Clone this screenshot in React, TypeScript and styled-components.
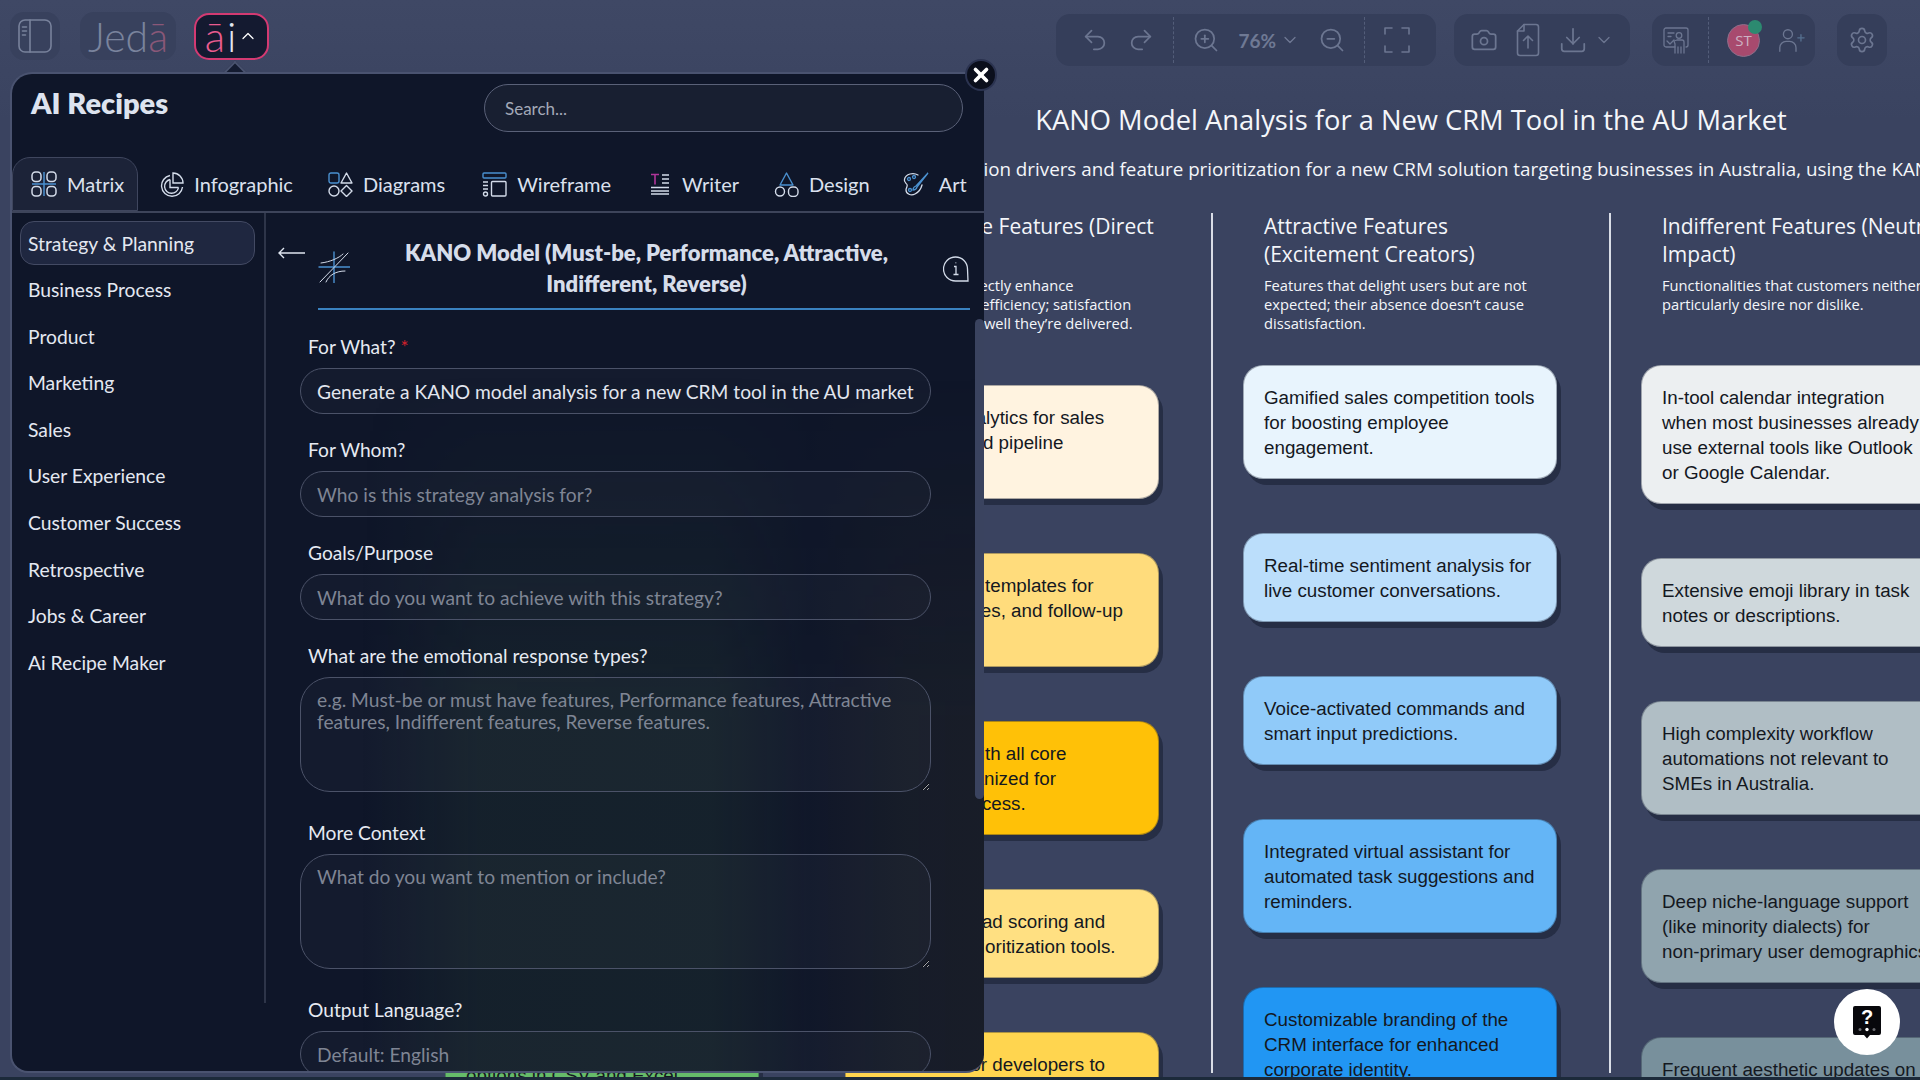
import React from "react";
import styled, { createGlobalStyle } from "styled-components";
import {
  Undo2,
  Redo2,
  ZoomIn,
  ZoomOut,
  ChevronDown,
  ChevronUp,
  Camera,
  Download,
  Settings,
  X,
} from "lucide-react";

const UI_FONT = `"Lato", "Noto Sans", sans-serif`;
const BOARD_FONT = `"Open Sans", "Noto Sans", sans-serif`;

const GlobalStyle = createGlobalStyle`
  html, body {
    margin: 0;
    padding: 0;
    width: 100%;
    height: 100%;
    overflow: hidden;
    background: #1c2a3a;
  }
  * {
    box-sizing: border-box;
  }
`;

const Page = styled.div`
  position: relative;
  width: 1920px;
  height: 1080px;
  overflow: hidden;
  background: #1c2a3a;
`;

const Screen = styled.div`
  height: 1077px;
  overflow: hidden;
  background: linear-gradient(180deg, #3f4865 0, #3a4360 120px, #3a4360 100%);
`;

/* top bar */
const TopBar = styled.header`
  display: flex;
  align-items: flex-start;
  height: 80px;
  padding: 12px 33px 0 10px;
`;

const Brand = styled.div`
  display: flex;
  align-items: center;
  gap: 20px;
`;

const Tile = styled.div`
  display: flex;
  align-items: center;
  justify-content: center;
  height: 48px;
  border-radius: 14px;
  background: #38415d;
`;

const SideToggle = styled(Tile)`
  width: 50px;
  color: #78829c;
`;

const JedaLogo = styled(Tile)`
  width: 96px;
  font: 300 41px/1 ${UI_FONT};
  color: #7a849d;
  span {
    color: #8a5878;
  }
`;

const AiButton = styled.button`
  display: flex;
  align-items: center;
  justify-content: center;
  gap: 2px;
  width: 75px;
  height: 47px;
  margin-left: -2px;
  padding: 0;
  border: 2px solid #d43a72;
  border-radius: 15px;
  background: #141a30;
  font: 300 42px/1 ${UI_FONT};
  color: #e3e6ef;
  span {
    color: #ea5c8f;
  }
`;

const Tools = styled.div`
  display: flex;
  margin-left: auto;
  margin-top: 2px;
  gap: 22px;
  color: #6c7691;
`;

const ToolGroup = styled.div<{ $pad?: number; $pull?: number }>`
  display: flex;
  align-items: center;
  gap: 18px;
  height: 52px;
  margin-right: ${(p) => p.$pull ?? 0}px;
  padding: 0 ${(p) => p.$pad ?? 25}px;
  border-radius: 14px;
  background: #353e5a;
`;

const ToolDivider = styled.i`
  display: block;
  height: 46px;
  border-left: 1px dashed #535d79;
`;

const ZoomValue = styled.span`
  display: flex;
  align-items: center;
  gap: 4px;
  font: 700 19px/1 ${UI_FONT};
  color: #6f7994;
`;

const Avatar = styled.div`
  position: relative;
  display: flex;
  align-items: center;
  justify-content: center;
  width: 33px;
  height: 33px;
  border-radius: 50%;
  background: #a84a6e;
  border: 1px solid #8d6f8b;
  font: 500 15px/1 ${BOARD_FONT};
  color: #cdb2c4;
  &::after {
    content: "";
    position: absolute;
    top: -5px;
    right: -3px;
    width: 14px;
    height: 14px;
    border-radius: 50%;
    background: #2c8a70;
  }
`;

/* board behind the panel */
const Board = styled.main`
  width: 1992px;
  margin-left: 415px;
  color: #f4f6fa;
  font-family: ${BOARD_FONT};
`;

const BoardTitle = styled.h1`
  margin: 20px 0 0;
  text-align: center;
  font-size: 27.3px;
  line-height: 40px;
  font-weight: 400;
`;

const BoardSub = styled.p`
  margin: 15px 0 0;
  text-align: center;
  white-space: nowrap;
  font-size: 18.8px;
  line-height: 28px;
`;

const Columns = styled.div`
  display: grid;
  grid-template-columns: repeat(5, 398px);
  margin-top: 30px;
`;

const Column = styled.section<{ $first?: boolean }>`
  height: 860px;
  border-left: ${(p) => (p.$first ? "0" : "2px solid #d9dde6")};
`;

const ColumnHead = styled.div`
  height: 110px;
  padding: 0 55px 0 51px;
  h2 {
    margin: 0;
    font-size: 21px;
    line-height: 27.5px;
    font-weight: 400;
  }
  p {
    margin: 8px 0 0;
    font-size: 14.7px;
    line-height: 19px;
  }
`;

const CardList = styled.div<{ $top: number }>`
  display: flex;
  flex-direction: column;
  gap: 54px;
  padding: ${(p) => p.$top}px 0 0 30px;
`;

const Card = styled.div<{ $bg: string }>`
  width: 314px;
  padding: 18.5px 20.5px 18.5px 20px;
  border-radius: 20px;
  background: ${(p) => p.$bg};
  border: 1px solid rgba(20, 28, 48, 0.35);
  box-shadow: 4px 6px 0 #262e45;
  color: #14181f;
  font: 400 18.8px/25px "Liberation Sans", Arial, sans-serif;
  flex: none;
`;

/* panel */
const Panel = styled.aside`
  position: absolute;
  left: 10px;
  top: 72px;
  width: 974px;
  height: 1001px;
  color: #dfe5f0;
  font-family: ${UI_FONT};
`;

const PanelArrow = styled.i`
  position: absolute;
  top: -8px;
  left: 217px;
  width: 16px;
  height: 16px;
  background: #141b30;
  border-top: 2px solid #4a5370;
  border-left: 2px solid #4a5370;
  transform: rotate(45deg);
`;

const CloseButton = styled.button`
  position: absolute;
  top: -13px;
  right: -13px;
  z-index: 3;
  display: flex;
  align-items: center;
  justify-content: center;
  width: 32px;
  height: 32px;
  padding: 0;
  border: 2px solid #2b3350;
  border-radius: 50%;
  background: #0b0f1c;
  color: #fff;
`;

const PanelBody = styled.div`
  position: relative;
  display: flex;
  flex-direction: column;
  height: 100%;
  overflow: hidden;
  border: 2px solid #4a5370;
  border-right-width: 0;
  border-radius: 22px 0 18px 18px;
  background: #0f1629;
  &::before {
    content: "";
    position: absolute;
    inset: 0;
    pointer-events: none;
    background: linear-gradient(
      90deg,
      transparent 36%,
      rgba(58, 96, 62, 0.15) 48%,
      rgba(58, 96, 62, 0.16) 72%,
      rgba(50, 60, 60, 0.04) 82%,
      rgba(110, 96, 40, 0.09) 92%,
      rgba(110, 96, 40, 0.1) 100%
    );
    mask-image: linear-gradient(180deg, transparent 30%, #000 65%);
  }
`;

const PanelHead = styled.div`
  position: relative;
  display: flex;
  justify-content: space-between;
  height: 81px;
  padding: 10px 21px 0 19px;
  h2 {
    margin: -3px 0 0;
    font-size: 29px;
    line-height: 44px;
    font-weight: 800;
    color: #dde3ef;
  }
`;

const SearchBox = styled.input`
  width: 479px;
  height: 48px;
  padding: 0 20px;
  border: 1.5px solid #5a6178;
  border-radius: 24px;
  background: rgba(255, 255, 255, 0.04);
  font: 400 17px ${UI_FONT};
  color: #dfe5f0;
  &::placeholder {
    color: #a3a9b8;
  }
`;

const TabBar = styled.nav`
  position: relative;
  display: flex;
  align-items: stretch;
  height: 58px;
  padding-top: 2px;
  border-bottom: 2px solid #3d445a;
`;

const Tab = styled.div<{ $active?: boolean; $lead?: number }>`
  display: flex;
  align-items: center;
  gap: 10px;
  margin-right: 2px;
  margin-left: ${(p) => p.$lead ?? 0}px;
  padding: 0 13px 0 18px;
  white-space: nowrap;
  font-size: 20px;
  border: 1.5px solid ${(p) => (p.$active ? "#3f465e" : "transparent")};
  border-radius: 18px 18px 0 0;
  background: ${(p) => (p.$active ? "#1c2338" : "transparent")};
  color: #dbe1ee;
`;

const BodyRow = styled.div`
  position: relative;
  display: flex;
  flex: 1;
  min-height: 0;
`;

const Sidebar = styled.ul`
  flex: none;
  width: 254px;
  height: 790px;
  margin: 0;
  padding: 8px 9px 0 8px;
  list-style: none;
  border-right: 2px solid #2e3549;
`;

const SideItem = styled.li<{ $active?: boolean }>`
  display: flex;
  align-items: center;
  height: 44px;
  margin-bottom: 2.6px;
  padding-left: 7px;
  font-size: 19.3px;
  color: #e4e8f1;
  border-radius: 14px;
  border: 1.5px solid ${(p) => (p.$active ? "#434a63" : "transparent")};
  background: ${(p) => (p.$active ? "#1f2740" : "transparent")};
`;

const Main = styled.div`
  position: relative;
  flex: 1;
  min-width: 0;
  padding: 24px 53px 0 34px;
`;

const RecipeHead = styled.div`
  display: flex;
  align-items: flex-start;
  margin: 0 -39px 0 -22px;
  gap: 12px;
`;

const BackArrow = styled.div`
  flex: none;
  margin-top: 6px;
  color: #dfe5f0;
`;

const RecipeTitleRow = styled.div`
  flex: 1;
  display: flex;
  align-items: flex-start;
  padding-bottom: 9px;
  border-bottom: 2px solid #3a82c0;
  h3 {
    flex: 1;
    margin: 0;
    padding: 0 20px;
    text-align: center;
    font-size: 22px;
    line-height: 31px;
    font-weight: 800;
    color: #d6ddea;
  }
`;

const Thumb = styled.i`
  position: absolute;
  top: 106px;
  right: 0;
  width: 9px;
  height: 480px;
  border-radius: 5px;
  background: #3a435f;
`;

const Form = styled.form`
  display: flex;
  flex-direction: column;
  margin-top: 25px;
`;

const Field = styled.label`
  display: flex;
  flex-direction: column;
  gap: 9px;
  margin-bottom: 24px;
`;

const FieldLabel = styled.span`
  padding-left: 8px;
  font-size: 19.2px;
  line-height: 24px;
  color: #e6eaf2;
  em {
    font-style: normal;
    color: #d4202c;
  }
`;

const inputCss = `
  width: 631px;
  border: 1.5px solid #4b5268;
  background: rgba(255, 255, 255, 0.025);
  font: 400 19.2px/22px ${UI_FONT};
  color: #e2e6ef;
  &::placeholder {
    color: #7f8594;
    opacity: 1;
  }
`;

const TextInput = styled.input`
  ${inputCss}
  height: 46px;
  padding: 0 16px;
  border-radius: 23px;
`;

const TextArea = styled.textarea`
  ${inputCss}
  display: block;
  height: 115px;
  margin-bottom: 5px;
  padding: 11px 16px;
  border-radius: 30px;
  resize: vertical;
`;

const HelpButton = styled.button`
  position: absolute;
  right: 20px;
  bottom: 25px;
  display: flex;
  align-items: center;
  justify-content: center;
  width: 66px;
  height: 66px;
  padding: 0;
  border: 0;
  border-radius: 50%;
  background: #fff;
`;

const TOOL_ICON = { fill: "none", stroke: "currentColor", strokeWidth: 1.6, strokeLinecap: "round" as const, strokeLinejoin: "round" as const };
const light = "#d3dbe9";
const blue = "#4a90cf";

function FullFrame() {
  return (
    <svg width="28" height="28" viewBox="0 0 28 28" {...TOOL_ICON}>
      <path d="M2 8V2h7M19 2h7v6M2 20v6h7M19 26h7v-6" />
    </svg>
  );
}

function FileUpload() {
  return (
    <svg width="24" height="34" viewBox="0 0 24 34" {...TOOL_ICON}>
      <path d="M8 1.500h12a2.500 2.500 0 0 1 2.500 2.500v26a2.500 2.500 0 0 1-2.500 2.500H4A2.500 2.500 0 0 1 1.500 30V8z" />
      <path d="M8 1.500V8H1.500M12 25V13M7.500 17.500 12 13l4.500 4.500" />
    </svg>
  );
}

function Presenter() {
  return (
    <svg width="28" height="28" viewBox="0 0 28 28" {...TOOL_ICON} strokeWidth={1.3}>
      <path d="M13 21H4a2 2 0 0 1-2-2V4a2 2 0 0 1 2-2h20a2 2 0 0 1 2 2v15a2 2 0 0 1-2 2" />
      <path d="M6 7h6M6 10.500h3M5 15l3 3 4-4" />
      <circle cx="17" cy="9.500" r="2.800" />
      <path d="M13 27v-9l-1-3 3-1h5a2 2 0 0 1 2 2v11M16 21v6M19 21v6" />
    </svg>
  );
}

function AddPerson() {
  return (
    <svg width="27" height="27" viewBox="0 0 30 30" {...TOOL_ICON} strokeWidth={1.5}>
      <circle cx="11" cy="8" r="5" />
      <path d="M2 27v-4a7 7 0 0 1 7-7h4a7 7 0 0 1 7 7v4" />
      <path d="M22 12h7M25.500 8.500v7" stroke="#56708f" />
    </svg>
  );
}

function PanelToggle() {
  return (
    <svg width="34" height="34" viewBox="0 0 34 34" {...TOOL_ICON}>
      <rect x="1" y="1" width="32" height="32" rx="6" />
      <path d="M12 1v32M4.500 8h4M4.500 12h4M4.500 16h3" />
    </svg>
  );
}

function MatrixIcon() {
  return (
    <svg width="26" height="26" viewBox="0 0 26 26" fill="none" stroke={light} strokeWidth="1.5">
      <rect x="1" y="1" width="9" height="9.500" rx="3.500" />
      <rect x="16" y="1" width="9" height="9.500" rx="3.500" />
      <rect x="1" y="15.500" width="9" height="9.500" rx="3.500" />
      <rect x="16" y="15.500" width="9" height="9.500" rx="3.500" />
      <path d="M13 1v24M1 13h24" stroke={blue} />
    </svg>
  );
}

function PieIcon() {
  return (
    <svg width="25" height="25" viewBox="0 0 25 25" fill="none" stroke={light} strokeWidth="1.4">
      <path d="M14 1a10 10 0 0 1 10 10H14z" />
      <path d="M11 3.500a10.500 10.500 0 1 0 12.500 11.500" />
      <path d="M11 7.500a7 7 0 1 0 8.500 8" />
      <path d="M19.500 15.500H11V7.500" />
    </svg>
  );
}

function ShapesIcon() {
  return (
    <svg width="25" height="25" viewBox="0 0 25 25" fill="none" stroke={light} strokeWidth="1.4" strokeLinejoin="round">
      <rect x="1" y="1" width="10" height="10" rx="2" stroke={blue} />
      <path d="M18.500 1 24 11H13z" />
      <circle cx="6" cy="19" r="5" />
      <path d="M18.500 13.500 24 19l-5.500 5.500L13 19z" />
    </svg>
  );
}

function WireframeIcon() {
  return (
    <svg width="25" height="25" viewBox="0 0 25 25" fill="none" stroke={light} strokeWidth="1.4">
      <rect x="1" y="1" width="23" height="5" rx="1" stroke={blue} />
      <rect x="9.500" y="9.500" width="14.500" height="14.500" rx="1" />
      <path d="M1 10h5M1 13.500h5M1 17h5" />
      <circle cx="3.500" cy="22" r="2" />
    </svg>
  );
}

function WriterIcon() {
  return (
    <svg width="20" height="22" viewBox="0 0 20 22" fill="none" stroke={light} strokeWidth="1.3" style={{ marginRight: 2 }}>
      <path d="M1 1.500h8M5 1.500v10" stroke="#b0359a" strokeWidth="1.6" />
      <path d="M12 2h7M12 6h7M12 10h7M1 14.500h18M1 18h18M1 21h18" />
    </svg>
  );
}

function TriangleCirclesIcon() {
  return (
    <svg width="25" height="25" viewBox="0 0 25 25" fill="none" stroke={light} strokeWidth="1.4" strokeLinejoin="round">
      <path d="M12.500 1 19 13H6z" stroke={blue} />
      <circle cx="6" cy="19.500" r="4.500" />
      <rect x="14.500" y="15" width="9.500" height="9.500" rx="4" />
    </svg>
  );
}

function PaletteIcon() {
  return (
    <svg width="26" height="25" viewBox="0 0 26 25" fill="none" stroke={light} strokeWidth="1.3" strokeLinecap="round">
      <path d="M15 3C10 0 3 2 1.500 7c-1 3 1.500 4 2.500 5.500S3 16 3 18c0 4 5 6 9 4 4-2 6-5 7-9" />
      <path d="M25 1 13 14c-1.500.5-3 2-3 4 2 0 3.500-1 4-3L25 1z" stroke={blue} />
      <circle cx="6" cy="7" r="1.500" stroke={blue} />
      <circle cx="11" cy="5" r="1.500" stroke={blue} />
      <circle cx="7" cy="18" r="1.500" stroke={blue} />
    </svg>
  );
}

function KanoIcon() {
  return (
    <svg width="32" height="32" viewBox="0 0 32 32" fill="none" strokeLinecap="round" style={{ flex: "none", marginTop: 14 }}>
      <path d="M16 1v31M1 16h31" stroke={blue} strokeWidth="1.4" />
      <path d="M2 31 30 2M3 12c9-1 18-5 22-9" stroke={light} strokeWidth="1" />
      <path d="M8 31c3-7 10-11 19-11" stroke={light} strokeWidth="1" />
    </svg>
  );
}

function InfoBubble() {
  return (
    <svg width="26" height="26" viewBox="0 0 26 26" fill="none" stroke={light} strokeWidth="1.300" style={{ flex: "none", marginTop: 19, marginRight: 1 }}>
      <path d="M25 25H12.500a12 12 0 1 1 12-12z" />
      <path d="M11 10.500h2v8M10.500 18.500h5M12.800 6.500v.8" />
    </svg>
  );
}

function HelpBubble() {
  return (
    <svg width="30" height="34" viewBox="0 0 30 34">
      <path d="M3 1h24a2 2 0 0 1 2 2v25a2 2 0 0 1-2 2h-9l-3 3.500-3-3.500H3a2 2 0 0 1-2-2V3a2 2 0 0 1 2-2z" fill="#08080c" />
      <text x="15" y="19" textAnchor="middle" fill="#fff" fontFamily="Liberation Sans, Arial, sans-serif" fontWeight="700" fontSize="20">?</text>
      <circle cx="8" cy="24.500" r="1.500" fill="#6b6b70" />
      <circle cx="15" cy="24.500" r="1.700" fill="#fff" />
      <circle cx="22" cy="24.500" r="1.500" fill="#6b6b70" />
    </svg>
  );
}

const TABS = [
  { label: "Matrix", icon: <MatrixIcon />, active: true },
  { label: "Infographic", icon: <PieIcon /> },
  { label: "Diagrams", icon: <ShapesIcon /> },
  { label: "Wireframe", icon: <WireframeIcon />, lead: 2 },
  { label: "Writer", icon: <WriterIcon />, lead: 4 },
  { label: "Design", icon: <TriangleCirclesIcon /> },
  { label: "Art", icon: <PaletteIcon />, lead: -2 },
];

const CATEGORIES = [
  "Strategy & Planning",
  "Business Process",
  "Product",
  "Marketing",
  "Sales",
  "User Experience",
  "Customer Success",
  "Retrospective",
  "Jobs & Career",
  "Ai Recipe Maker",
];

const COLUMNS = [
  {
    title: "",
    desc: "",
    top: 695,
    cards: [["#66bb6a", "Comprehensive data-export options in CSV and Excel."]],
  },
  {
    title: "Performance Features (Direct Satisfiers)",
    desc: "Features that directly enhance productivity and efficiency; satisfaction depends on how well they’re delivered.",
    top: 62,
    cards: [
      ["#fff3e0", "Advanced analytics for sales conversion and pipeline tracking."],
      ["#ffdc7c", "Prebuilt email templates for quotes, invoices, and follow-up emails."],
      ["#ffc107", "Intuitive UX with all core functions organized for convenient access."],
      ["#ffe082", "AI-powered lead scoring and opportunity prioritization tools."],
      ["#ffd54f", "API access for developers to extend the platform."],
    ],
  },
  {
    title: "Attractive Features (Excitement Creators)",
    desc: "Features that delight users but are not expected; their absence doesn’t cause dissatisfaction.",
    top: 42,
    cards: [
      ["#e8f4fd", "Gamified sales competition tools for boosting employee engagement."],
      ["#bbdefb", "Real-time sentiment analysis for live customer conversations."],
      ["#90caf9", "Voice-activated commands and smart input predictions."],
      ["#64b5f6", "Integrated virtual assistant for automated task suggestions and reminders."],
      ["#2196f3", "Customizable branding of the CRM interface for enhanced corporate identity."],
    ],
  },
  {
    title: "Indifferent Features (Neutral Impact)",
    desc: "Functionalities that customers neither particularly desire nor dislike.",
    top: 42,
    cards: [
      ["#eceff1", "In-tool calendar integration when most businesses already use external tools like Outlook or Google Calendar."],
      ["#cfd8dc", "Extensive emoji library in task notes or descriptions."],
      ["#b0bec5", "High complexity workflow automations not relevant to SMEs in Australia."],
      ["#90a4ae", "Deep niche-language support (like minority dialects) for non\u2011primary user demographics."],
      ["#78909c", "Frequent aesthetic updates on interface themes."],
    ],
  },
];

export default function App() {
  return (
    <Page>
      <GlobalStyle />
      <Screen>
        <TopBar>
          <Brand>
            <SideToggle>
              <PanelToggle />
            </SideToggle>
            <JedaLogo>
              Jed<span>ā</span>
            </JedaLogo>
            <AiButton>
              <span>ā</span>i
              <ChevronUp size={20} color="#fff" strokeWidth={1.5} />
            </AiButton>
          </Brand>
          <Tools>
            <ToolGroup $pull={-4}>
              <Undo2 size={28} strokeWidth={1.5} />
              <Redo2 size={28} strokeWidth={1.5} />
              <ToolDivider />
              <ZoomIn size={28} strokeWidth={1.5} />
              <ZoomValue>
                76%
                <ChevronDown size={20} strokeWidth={1.5} />
              </ZoomValue>
              <ZoomOut size={28} strokeWidth={1.5} />
              <ToolDivider />
              <FullFrame />
            </ToolGroup>
            <ToolGroup $pad={16}>
              <Camera size={28} strokeWidth={1.5} />
              <FileUpload />
              <Download size={30} strokeWidth={1.4} />
              <ChevronDown size={20} strokeWidth={1.5} style={{ marginLeft: -12 }} />
            </ToolGroup>
            <ToolGroup $pad={10}>
              <Presenter />
              <ToolDivider />
              <Avatar>ST</Avatar>
              <AddPerson />
            </ToolGroup>
            <ToolGroup $pad={11}>
              <Settings size={28} strokeWidth={1.4} />
            </ToolGroup>
          </Tools>
        </TopBar>

        <Board>
          <BoardTitle>KANO Model Analysis for a New CRM Tool in the AU Market</BoardTitle>
          <BoardSub>
            Analysis of satisfaction drivers and feature prioritization for a new CRM solution targeting businesses in
            Australia, using the KANO model.
          </BoardSub>
          <Columns>
            {COLUMNS.map((col, i) => (
              <Column key={i} $first={i === 0}>
                <ColumnHead>
                  {col.title && <h2>{col.title}</h2>}
                  {col.desc && <p>{col.desc}</p>}
                </ColumnHead>
                <CardList $top={col.top}>
                  {col.cards.map(([bg, text]) => (
                    <Card key={text} $bg={bg}>
                      {text}
                    </Card>
                  ))}
                </CardList>
              </Column>
            ))}
            <Column />
          </Columns>
        </Board>
      </Screen>

      <Panel>
        <PanelArrow />
        <CloseButton aria-label="Close">
          <X size={22} strokeWidth={4} />
        </CloseButton>
        <PanelBody>
          <PanelHead>
            <h2>AI Recipes</h2>
            <SearchBox placeholder="Search..." />
          </PanelHead>
          <TabBar>
            {TABS.map((t) => (
              <Tab key={t.label} $active={t.active} $lead={t.lead}>
                {t.icon}
                {t.label}
              </Tab>
            ))}
          </TabBar>
          <BodyRow>
            <Sidebar>
              {CATEGORIES.map((c, i) => (
                <SideItem key={c} $active={i === 0}>
                  {c}
                </SideItem>
              ))}
            </Sidebar>
            <Main>
              <RecipeHead>
                <BackArrow>
                  <svg width="28" height="12" viewBox="0 0 28 12" fill="none" stroke="currentColor" strokeWidth="1.4">
                    <path d="M27 6H1M6 1 1 6l5 5" />
                  </svg>
                </BackArrow>
                <RecipeTitleRow>
                  <KanoIcon />
                  <h3>KANO Model (Must-be, Performance, Attractive, Indifferent, Reverse)</h3>
                  <InfoBubble />
                </RecipeTitleRow>
              </RecipeHead>
              <Thumb />
              <Form>
                <Field>
                  <FieldLabel>
                    For What? <em>*</em>
                  </FieldLabel>
                  <TextInput readOnly value="Generate a KANO model analysis for a new CRM tool in the AU market" />
                </Field>
                <Field>
                  <FieldLabel>For Whom?</FieldLabel>
                  <TextInput placeholder="Who is this strategy analysis for?" />
                </Field>
                <Field>
                  <FieldLabel>Goals/Purpose</FieldLabel>
                  <TextInput placeholder="What do you want to achieve with this strategy?" />
                </Field>
                <Field>
                  <FieldLabel>What are the emotional response types?</FieldLabel>
                  <TextArea placeholder="e.g. Must-be or must have features, Performance features, Attractive features, Indifferent features, Reverse features." />
                </Field>
                <Field>
                  <FieldLabel>More Context</FieldLabel>
                  <TextArea placeholder="What do you want to mention or include?" />
                </Field>
                <Field>
                  <FieldLabel>Output Language?</FieldLabel>
                  <TextInput placeholder="Default: English" />
                </Field>
              </Form>
            </Main>
          </BodyRow>
        </PanelBody>
      </Panel>

      <HelpButton aria-label="Help">
        <HelpBubble />
      </HelpButton>
    </Page>
  );
}
